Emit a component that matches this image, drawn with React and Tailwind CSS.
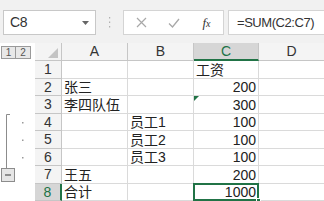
import React from "react";

const font = { fontFamily: '"Liberation Sans", "Noto Sans CJK SC", sans-serif' };

const rows = [
  { n: 1, a: "", b: "", c: "工资", cText: true },
  { n: 2, a: "张三", b: "", c: "200" },
  { n: 3, a: "李四队伍", b: "", c: "300", flag: true },
  { n: 4, a: "", b: "员工1", c: "100" },
  { n: 5, a: "", b: "员工2", c: "100" },
  { n: 6, a: "", b: "员工3", c: "100" },
  { n: 7, a: "王五", b: "", c: "200" },
  { n: 8, a: "合计", b: "", c: "1000", active: true },
];

function Outline() {
  return (
    <svg width="35" height="140" viewBox="0 0 35 140">
      <path d="M10 53.5 H6.5 V107" stroke="#8c8c8c" strokeWidth="1" fill="none" />
      <rect x="22" y="61" width="1.5" height="1.5" fill="#9a9a9a" />
      <rect x="22" y="78.5" width="1.5" height="1.5" fill="#9a9a9a" />
      <rect x="22" y="96" width="1.5" height="1.5" fill="#9a9a9a" />
      <rect x="1.5" y="107.5" width="13" height="13" fill="#e6e6e6" stroke="#8c8c8c" />
      <path d="M5 114 H11" stroke="#555" strokeWidth="1.2" />
    </svg>
  );
}

export default function App() {
  return (
    <div className="w-[324px] h-[201px] overflow-hidden bg-white text-[#222]" style={font}>
      {/* formula bar */}
      <div className="h-[43px] bg-[#f1f1f1] flex items-start pt-[10px] pl-[3px] pr-0">
        <div className="w-[93px] h-[25px] bg-white border border-[#c8c8c8] flex items-center justify-between pl-[6px] pr-[6px]">
          <span className="text-[14px] text-[#333] tracking-[-0.3px]">C8</span>
          <svg width="7" height="4" viewBox="0 0 7 4">
            <path d="M0 0 H7 L3.5 4 Z" fill="#666" />
          </svg>
        </div>
        <div className="w-[27px] h-[25px] flex items-center justify-center">
          <svg width="3" height="11" viewBox="0 0 3 11">
            <rect x="1" y="0" width="1.2" height="1.5" fill="#b0b0b0" />
            <rect x="1" y="4.5" width="1.2" height="1.5" fill="#b0b0b0" />
            <rect x="1" y="9" width="1.2" height="1.5" fill="#b0b0b0" />
          </svg>
        </div>
        <div className="w-[101px] h-[25px] bg-white border border-[#d4d4d4] flex items-center">
          <div className="w-[34px] flex justify-center">
            <svg width="11" height="11" viewBox="0 0 11 11">
              <path d="M1 1 L10 10 M10 1 L1 10" stroke="#a8a8a8" strokeWidth="1.2" />
            </svg>
          </div>
          <div className="w-[32px] flex justify-center">
            <svg width="12" height="10" viewBox="0 0 12 10">
              <path d="M1 5.5 L4.5 9 L11 1" stroke="#a8a8a8" strokeWidth="1.3" fill="none" />
            </svg>
          </div>
          <div className="flex-1 flex justify-center">
            <span className="text-[13px] italic text-[#333]" style={{ fontFamily: '"Liberation Serif", serif' }}>
              f<span className="text-[10px]">x</span>
            </span>
          </div>
        </div>
        <div className="flex-1 ml-[4px] h-[25px] bg-white border border-[#d4d4d4] border-r-0 flex items-center pl-[8px]">
          <span className="text-[13px] text-[#333] tracking-[-0.45px]">=SUM(C2:C7)</span>
        </div>
      </div>

      {/* sheet */}
      <div className="flex">
        <div className="w-[35px] flex flex-col">
          <div className="h-[18px] flex items-start pt-[3px] pl-[1px]">
            <div className="w-[15px] h-[13px] border border-[#9a9a9a] bg-[#e8e8e8] flex items-center justify-center text-[10px] text-[#555]">1</div>
            <div className="w-[15px] h-[13px] border border-l-0 border-[#9a9a9a] bg-[#e8e8e8] flex items-center justify-center text-[10px] text-[#555]">2</div>
          </div>
          <Outline />
        </div>

        <div className="flex-1 flex flex-col">
          {/* column headers */}
          <div className="h-[18px] flex bg-[#f4f4f4]">
            <div className="w-[27px] border-r border-b border-[#c6c6c6] flex items-end justify-end pr-[3px] pb-[2px]">
              <svg width="10" height="10" viewBox="0 0 10 10">
                <path d="M10 0 V10 H0 Z" fill="#c4c4c4" />
              </svg>
            </div>
            <div className="w-[66px] border-r border-b border-[#c6c6c6] flex items-center justify-center text-[14px] text-[#333]">A</div>
            <div className="w-[66px] border-r border-b border-[#c6c6c6] flex items-center justify-center text-[14px] text-[#333]">B</div>
            <div className="w-[65px] bg-[#d6d6d6] border-r border-[#c6c6c6] border-b-2 border-b-[#217346] flex items-center justify-center text-[14px] text-[#217346]">C</div>
            <div className="flex-1 border-b border-[#c6c6c6] flex items-center justify-center text-[14px] text-[#333]">D</div>
          </div>

          {rows.map((r) => (
            <div key={r.n} className="h-[17.5px] flex text-[14px] leading-none">
              <div
                className={
                  r.active
                    ? "w-[27px] bg-[#d6d6d6] border-r-2 border-[#217346] border-b border-b-[#c6c6c6] flex items-center justify-center text-[#217346]"
                    : "w-[27px] bg-[#f4f4f4] border-r border-b border-[#c6c6c6] flex items-center justify-center text-[#333]"
                }
              >
                {r.n}
              </div>
              <div className="w-[66px] border-r border-b border-[#dadada] flex items-end pl-[2px] pb-[1px] whitespace-nowrap">
                {r.a}
              </div>
              <div className="w-[66px] border-r border-b border-[#dadada] flex items-end pl-[2px] pb-[1px] whitespace-nowrap">
                {r.b}
              </div>
              <div
                className={
                  "relative w-[65px] border-r border-b border-[#dadada] flex items-end pb-[1px] whitespace-nowrap " +
                  (r.cText ? "justify-start pl-[2px]" : "justify-end pr-[2px]")
                }
              >
                {r.c}
                {r.flag && (
                  <svg className="absolute left-0 top-0" width="5" height="5" viewBox="0 0 5 5">
                    <path d="M0 0 H5 L0 5 Z" fill="#217346" />
                  </svg>
                )}
                {r.active && (
                  <>
                    <div className="absolute -left-[1px] -top-[1px] -right-[1px] -bottom-[1px] border-2 border-[#217346]" />
                    <div className="absolute -right-[3px] -bottom-[3px] w-[5px] h-[5px] bg-[#217346] border border-white" />
                  </>
                )}
              </div>
              <div className="flex-1 border-b border-[#dadada]" />
            </div>
          ))}
        </div>
      </div>
    </div>
  );
}
